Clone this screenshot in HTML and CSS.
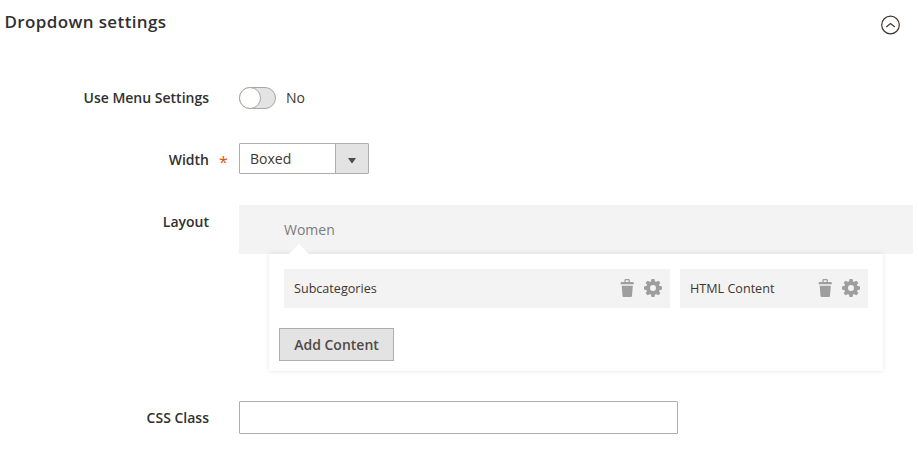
FILE: index.html
```html
<!DOCTYPE html>
<html lang="en">
<head>
<meta charset="utf-8">
<title>Dropdown settings</title>
<link rel="stylesheet" href="styles.css">
</head>
<body>
<svg class="sprite" aria-hidden="true">
  <symbol id="trash" viewBox="0 0 14 18">
    <path d="M.6 5.200V3.900Q.6 3.100 1.600 3.100H4.400V1.200Q4.400 0 5.600 0H8.700Q9.900 0 9.900 1.200V3.100H12.800Q13.800 3.100 13.800 3.900V5.200ZM5.700 3.100H8.600V1.300H5.700ZM1.700 6.700H12.800L12 17Q11.900 18 10.900 18H3.600Q2.600 18 2.500 17Z" fill-rule="evenodd"/>
  </symbol>
  <symbol id="gear" viewBox="-9 -9 18 18">
    <path id="tooth" d="M-2.300-5.700L-1.400-9H1.400L2.300-5.700Z"/>
    <use href="#tooth" transform="rotate(45)"/>
    <use href="#tooth" transform="rotate(90)"/>
    <use href="#tooth" transform="rotate(135)"/>
    <use href="#tooth" transform="rotate(180)"/>
    <use href="#tooth" transform="rotate(225)"/>
    <use href="#tooth" transform="rotate(270)"/>
    <use href="#tooth" transform="rotate(315)"/>
    <circle r="4.900" fill="none" stroke="currentColor" stroke-width="3.800"/>
  </symbol>
</svg>
<section class="fieldset">
  <header class="heading">
    <h2>Dropdown settings</h2>
    <svg class="collapse" viewBox="0 0 20 20"><circle cx="10.500" cy="10" r="8.800"/><path d="M6.200 12L10.500 8.500L14.800 12"/></svg>
  </header>
  <div class="field field-toggle">
    <label>Use Menu Settings</label>
    <div class="control switch-control"><span class="switch"></span><span>No</span></div>
  </div>
  <div class="field field-width">
    <label class="required">Width</label>
    <div class="select"><span>Boxed</span><i><svg viewBox="0 0 8 5"><path d="M0 0H8L4.500 5H3.500Z"/></svg></i></div>
  </div>
  <div class="field field-layout">
    <label>Layout</label>
    <div class="layout">
      <div class="menu-bar"><span class="menu-item">Women</span></div>
      <div class="panel">
        <div class="blocks">
          <div class="block block-wide"><span>Subcategories</span><svg class="trash"><use href="#trash"/></svg><svg class="gear"><use href="#gear"/></svg></div>
          <div class="block"><span>HTML Content</span><svg class="trash"><use href="#trash"/></svg><svg class="gear"><use href="#gear"/></svg></div>
        </div>
        <button class="add" type="button">Add Content</button>
      </div>
    </div>
  </div>
  <div class="field field-class">
    <label for="css-class">CSS Class</label>
    <input id="css-class" type="text">
  </div>
</section>
</body>
</html>
```
FILE: styles.css
```css
*, *::before, *::after { box-sizing: border-box; }
body {
  margin: 0;
  background: #fff;
  color: #41362f;
  font: 14px/20px "Open Sans", sans-serif;
  overflow: hidden;
}
.sprite { display: block; width: 0; height: 0; }
.heading {
  display: flex;
  justify-content: space-between;
  height: 87px;
  padding: 10px 18px 0 4.500px;
}
.heading h2 {
  margin: 0;
  color: #303030;
  font-size: 17px;
  font-weight: 600;
  line-height: 24px;
  letter-spacing: .38px;
}
.collapse {
  width: 20px;
  height: 20px;
  margin-top: 5px;
  fill: none;
  stroke: #41362f;
  stroke-width: 1.2;
}
.field {
  display: grid;
  grid-template-columns: 209px 674px;
  column-gap: 30px;
  align-items: start;
}
.field label {
  position: relative;
  color: #303030;
  font-weight: 600;
  text-align: right;
}
.required::after {
  content: "*";
  position: absolute;
  left: 219px;
  top: 9px;
  color: #eb5202;
  font-size: 16px;
  font-weight: 400;
}
.field-toggle { height: 56px; }
.field-toggle label { padding-top: 1px; }
.switch-control { display: flex; gap: 10px; align-items: center; }
.switch {
  display: flex;
  width: 37px;
  height: 22px;
  border: 1px solid #aaa6a0;
  border-radius: 11px;
  background: #e3e3e3;
}
.switch::before {
  content: "";
  flex: none;
  width: 22px;
  height: 22px;
  margin: -1px;
  border: 1px solid #aaa6a0;
  border-radius: 50%;
  background: #fff;
}
.field-width { height: 62px; }
.field-width label { padding-top: 7px; }
.select {
  display: flex;
  width: 130px;
  height: 31px;
  border: 1px solid #adadad;
  border-radius: 1px;
}
.select span { flex: 1; padding: 5px 10px; }
.select i {
  display: flex;
  width: 34px;
  margin-left: 1px;
  padding: 3px 1px 0 0;
  align-items: center;
  justify-content: center;
  border-left: 1px solid #adadad;
  background: #e3e3e3;
  flex: 0 0 33px;
}
.select svg { width: 8px; height: 5px; fill: #514943; }
.field-layout { height: 196px; }
.field-layout label { padding-top: 7px; }
.menu-bar {
  height: 49px;
  padding: 15px 45px;
  background: #f3f3f3;
  color: #7c7c7c;
}
.panel {
  position: relative;
  width: 614px;
  height: 117px;
  margin-left: 30px;
  padding: 15px 15px 10px 10px;
  background: #fff;
  box-shadow: 0 0 5px rgba(0, 0, 0, .1);
}
.panel::before {
  content: "";
  position: absolute;
  left: 20px;
  top: -10px;
  border: 10px solid transparent;
  border-top: 0;
  border-bottom-color: #fff;
}
.blocks { display: flex; gap: 10px; padding-left: 5px; }
.block {
  display: flex;
  align-items: center;
  width: 188px;
  height: 39px;
  padding: 0 8px 1px 10px;
  background: #f3f3f3;
  font-size: 12.600px;
}
.block-wide { width: 386px; }
.block span { flex: 1; padding-top: 2px; }
.block svg { height: 18px; color: #9e9e9e; fill: currentColor; }
.trash { width: 14px; margin-right: 10px; }
.gear { width: 18px; }
.add {
  display: block;
  width: 115px;
  height: 33px;
  margin-top: 20px;
  padding: 0;
  border: 1px solid #adadad;
  background: #e3e3e3;
  color: #514943;
  font: 600 14px/20px "Open Sans", sans-serif;
}
.field-class label { padding-top: 7px; }
.field-class input {
  width: 439px;
  height: 33px;
  padding: 0 10px;
  border: 1px solid #adadad;
  border-radius: 1px;
  font: inherit;
}
```
